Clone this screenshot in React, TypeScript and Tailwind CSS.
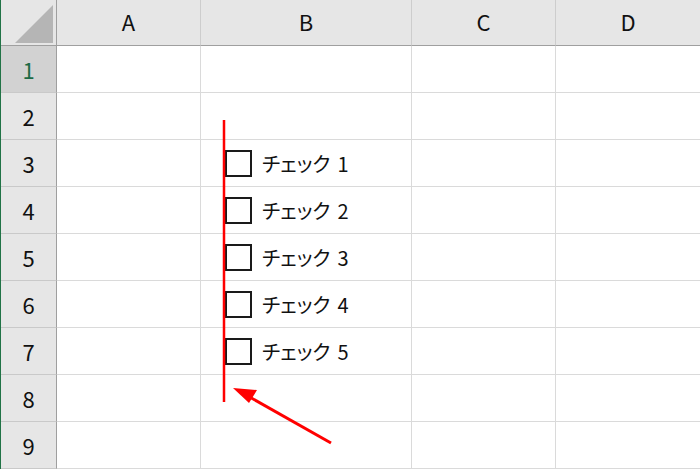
const cols = ['A', 'B', 'C', 'D'];
const rows = [1, 2, 3, 4, 5, 6, 7, 8, 9];

const checks: Record<number, string> = {
  3: '1',
  4: '2',
  5: '3',
  6: '4',
  7: '5',
};

const font = { fontFamily: '"Noto Sans CJK JP", "Noto Sans", sans-serif' };

export default function App() {
  return (
    <div className="relative w-[700px] h-[469px] overflow-hidden bg-white border-l border-[#217346]" style={font}>
      <div className="grid grid-cols-[56px_144px_211px_144px_145px] grid-rows-[46px_repeat(9,47px)]">
        {/* corner */}
        <div className="relative bg-[#e6e6e6] border-r border-b border-[#9f9f9f]">
          <svg className="absolute left-0 top-0" width="56" height="46">
            <polygon points="14,43 52,43 52,5" fill="#b5b5b5" />
          </svg>
        </div>
        {cols.map((c) => (
          <div
            key={c}
            className="flex items-center justify-center pb-[2px] bg-[#e6e6e6] border-r border-[#cdcdcd] border-b border-b-[#9f9f9f] text-[22px] text-[#111]"
          >
            {c}
          </div>
        ))}
        {rows.map((r) => (
          <div key={r} className="contents">
            <div
              className={
                'flex items-center justify-center border-r border-r-[#9f9f9f] border-b border-[#c9c9c9] text-[22px] ' +
                (r === 1 ? 'bg-[#d2d2d2] text-[#1d6b45]' : 'bg-[#e6e6e6] text-[#111]')
              }
            >
              {r}
            </div>
            {cols.map((c) => (
              <div key={c} className="flex items-center border-r border-b border-[#dadada]">
                {c === 'B' && checks[r] && (
                  <div className="flex items-center gap-[10px] pl-[24px] pt-[1px]">
                    <span className="w-[27px] h-[27px] border-2 border-[#1a1a1a]" />
                    <span className="text-[20px] text-[#111] [font-feature-settings:'palt']">
                      チェック<span className="ml-[7px]">{checks[r]}</span>
                    </span>
                  </div>
                )}
              </div>
            ))}
          </div>
        ))}
      </div>

      {/* annotation overlay */}
      <svg className="absolute left-0 top-0 pointer-events-none" width="700" height="469">
        <line x1="223" y1="120" x2="223" y2="402" stroke="#ff0000" strokeWidth="2.5" />
        <line x1="330" y1="443" x2="245" y2="395" stroke="#ff0000" strokeWidth="3" />
        <polygon points="232,388 256,390 248,403" fill="#ff0000" />
      </svg>
    </div>
  );
}
